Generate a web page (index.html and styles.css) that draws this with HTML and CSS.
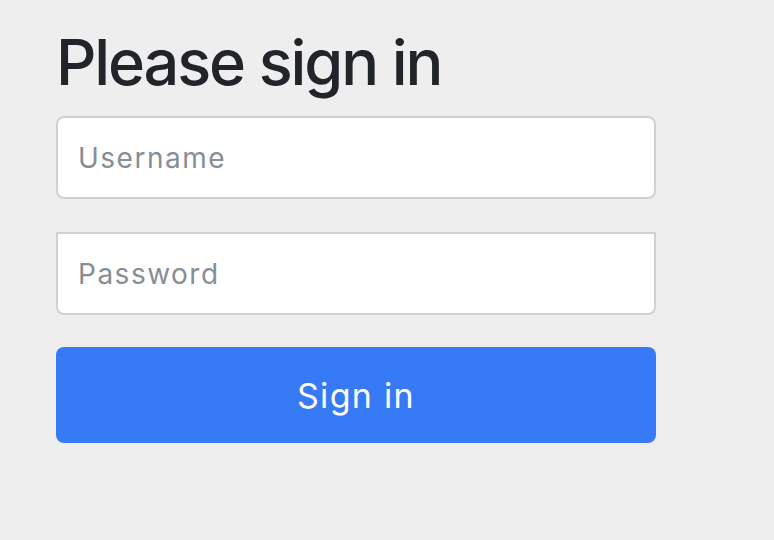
FILE: index.html
```html
<!DOCTYPE html>
<html lang="en">
  <head>
    <meta charset="UTF-8" />
    <meta name="viewport" content="width=device-width, initial-scale=1.0" />
    <title>Please sign in</title>
    <link rel="stylesheet" href="styles.css">
  </head>
  <body>
    <div class="content">
      <form class="login-form" method="post" action="/login">
        <h2 class="form-heading">Please sign in</h2>
        <input type="text" id="username" name="username" class="form-control first" placeholder="Username" autocomplete="off" />
        <input type="password" id="password" name="password" class="form-control last" placeholder="Password" />
        <button class="btn-primary" type="submit">Sign in</button>
      </form>
    </div>
  </body>
</html>
```

FILE: styles.css
```css
/* page */
body {
  margin: 0;
  background-color: #eeeeee;
  font-family: 'Inter', 'Liberation Sans', sans-serif;
  color: #212529;
}

.content {
  padding: 24px 0 0 56px;
}

/* form */
.login-form {
  width: 600px;
  display: flex;
  flex-direction: column;
}

.form-heading {
  font-size: 63px;
  font-weight: 500;
  line-height: 76px;
  margin: 0 0 16px 0;
  letter-spacing: -2.1px;
}

.form-control {
  height: 83px;
  box-sizing: border-box;
  padding: 0 20px;
  margin: 0 0 33px 0;
  border: 2px solid #d0d0d0;
  border-radius: 8px;
  background: white;
  font-family: inherit;
  font-size: 28px;
  letter-spacing: 1.5px;
  color: #212529;
  outline: none;
}

.form-control::placeholder {
  color: #868e96;
}

.form-control.last {
  border-top-left-radius: 0;
  border-top-right-radius: 0;
  margin-bottom: 32px;
}

/* button */
.btn-primary {
  height: 96px;
  border: none;
  border-radius: 8px;
  background-color: #367af6;
  color: white;
  font-family: inherit;
  font-size: 34px;
  letter-spacing: 1.3px;
  cursor: pointer;
}
```
